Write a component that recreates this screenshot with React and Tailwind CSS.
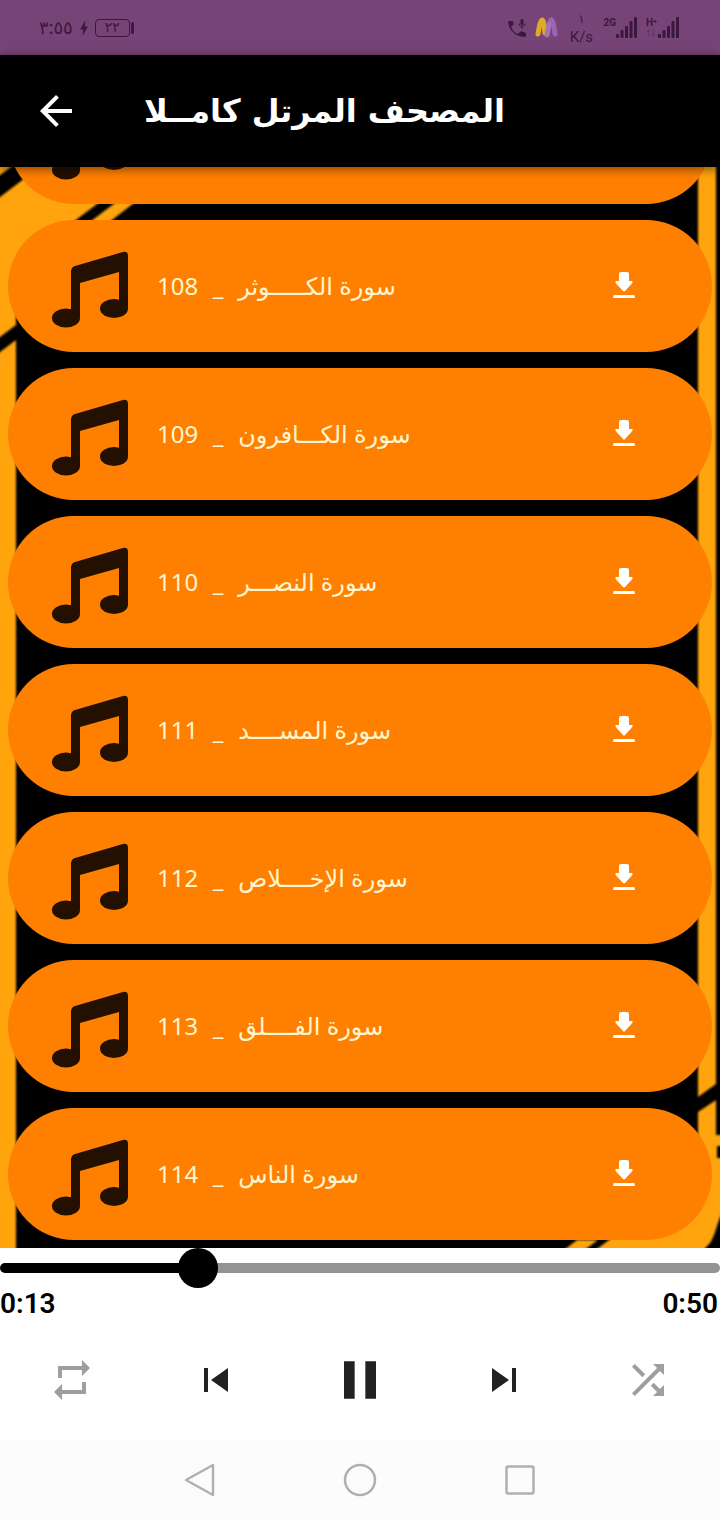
import React, { useState } from 'react';
import { MdArrowBack, MdBolt, MdPause, MdPhoneInTalk, MdRepeat, MdShuffle, MdSkipNext, MdSkipPrevious } from 'react-icons/md';

const DURATION = 50000;

const SURAHS = [
  { number: 108, name: 'سورة الكـــــوثر' },
  { number: 109, name: 'سورة الكـــافرون' },
  { number: 110, name: 'سورة النصـــر' },
  { number: 111, name: 'سورة المســــد' },
  { number: 112, name: 'سورة الإخــــلاص' },
  { number: 113, name: 'سورة الفــــلق' },
  { number: 114, name: 'سورة الناس' },
];

function formatTime(ms) {
  const seconds = Math.floor(ms / 1000);
  return `${Math.floor(seconds / 60)}:${String(seconds % 60).padStart(2, '0')}`;
}

function SignalBars() {
  return (
    <svg width="22" height="22" viewBox="0 0 22 22" fill="currentColor" aria-hidden="true">
      <rect x="0" y="17" width="3" height="4" rx="1" />
      <rect x="4.5" y="13" width="3" height="8" rx="1" />
      <rect x="9" y="9" width="3" height="12" rx="1" />
      <rect x="13.5" y="4" width="3" height="17" rx="1" />
      <rect x="18" y="0" width="3" height="21" rx="1" />
    </svg>
  );
}

function CarrierLogo() {
  return (
    <svg width="24" height="24" viewBox="0 0 24 24" fill="none" strokeLinecap="round" strokeLinejoin="round" strokeWidth="5" aria-hidden="true">
      <path d="M12 18 C13 12 14 7 16 4 C18 3 19 11 20 18" stroke="#9a64ae" />
      <path d="M3 18 C4 11 5 5 7 4 C9 4 9 12 10 17" stroke="#dfab25" />
      <path d="M12 19 L14 9" stroke="#a872b8" />
    </svg>
  );
}

function StatusBar() {
  return (
    <div className="h-[55px] shrink-0 bg-[#774477] text-[#3b183d] flex items-center justify-between pl-[39px] pr-10 font-['Roboto','DejaVu_Sans',sans-serif]">
      <div className="flex items-center gap-0.5">
        <span className="text-lg leading-none font-medium">٣:٥٥</span>
        <MdBolt size={18} />
        <div className="flex items-center gap-px">
          <span className="w-[35px] h-[18px] border border-current rounded-sm text-sm leading-none text-center">٢٢</span>
          <span className="w-[3px] h-3 rounded-sm bg-current" />
        </div>
      </div>
      <div className="flex items-center gap-2">
        <svg width="20" height="22" viewBox="0 0 20 22" fill="currentColor" aria-hidden="true">
          <path d="M4 10 C6 14 8 16 11 17 L13 15 Q14 14 15 14.500 L18 15.500 Q19 16 19 17 V19 Q19 20 17.500 20 C8 19.500 2 13 1 5 Q1 4 2 4 H5 Q6 4 6.200 5 L6.500 7.500 Z" />
          <rect x="13.500" y="2" width="3" height="6" rx="1.500" />
          <path d="M12 6.500 A3 3 0 0 0 18 6.500 M15 9.500 V12" fill="none" stroke="currentColor" />
        </svg>
        <CarrierLogo />
        <div className="w-7 pt-0.5 flex flex-col items-center">
          <span className="text-xs leading-4">١</span>
          <span className="text-[15px] leading-5">K/s</span>
        </div>
        <div className="flex items-start gap-2">
          <div className="flex items-start">
            <span className="text-[10px] leading-3 font-bold">2G</span>
            <SignalBars />
          </div>
          <div className="flex items-start">
            <span className="w-3 flex flex-col text-[10px] leading-3 font-bold">
              H⁺
              <svg width="10" height="9" viewBox="0 0 10 9" fill="none" stroke="currentColor" opacity="0.4" aria-hidden="true">
                <path d="M3 8 V1 L0.500 4 M7 1 V8 L9.500 5" />
              </svg>
            </span>
            <SignalBars />
          </div>
        </div>
      </div>
    </div>
  );
}

function Backdrop() {
  return (
    <svg className="absolute inset-0 w-full h-full" viewBox="0 0 720 1081" preserveAspectRatio="none" fill="#ffa40a" aria-hidden="true">
      <defs>
        <filter id="soft" x="-5%" y="-5%" width="110%" height="110%">
          <feGaussianBlur stdDeviation="1" />
        </filter>
      </defs>
      <g filter="url(#soft)">
        <path d="M-8 -8 H22 L-8 14 Z" />
        <path d="M-8 36 L50 -8 H157 L16 98 V158 L-8 176 Z" />
        <path d="M173 -8 H191 L90 70 H70 Z" />
        <path d="M-8 191 L16 173 V1090 H-8 Z" />
        <path d="M698 -8 H716 V917 L698 930 Z" />
        <path d="M698 945 L716 933 V968 H728 V979 H717 V991 H728 V1040 C718 1046 717 1066 710 1076 Q706 1080 698 1090 H586 L609 1073 L698 1010 Z" />
        <path d="M555 1090 L577 1073 H598 L575 1090 Z" />
      </g>
    </svg>
  );
}

function MusicIcon() {
  return (
    <svg width="80" height="88" viewBox="0 -8 80 88" fill="#241000" aria-hidden="true">
      <path d="M21 22 Q21 17 25 16 L73 2 Q78 1 78 6 V58 H69 V22 L30 33 V68 H21 Z" />
      <ellipse cx="16" cy="68" rx="14" ry="9.500" />
      <ellipse cx="64" cy="58.500" rx="14" ry="9.500" />
    </svg>
  );
}

function DownloadIcon() {
  return (
    <svg width="24" height="28" viewBox="0 0 24 28" fill="currentColor" aria-hidden="true">
      <path d="M7 2 Q7 0 9 0 H15 Q17 0 17 2 V9 H19.500 Q21.500 9.500 20 11.500 L13 19 Q12 20 11 19 L4 11.500 Q2.500 9.500 4.500 9 H7 Z" />
      <rect x="1" y="23" width="22" height="3" rx="1.500" />
    </svg>
  );
}

// A row without a surah is the one scrolled under the header
function SurahRow({ surah }) {
  return (
    <li className="h-[132px] shrink-0 rounded-full bg-[#ff8000] flex items-center pl-[42px] pr-[76px]">
      <MusicIcon />
      {surah && (
        <>
          <div className="flex-1 flex items-center pl-[27px] text-2xl text-[#fff5cf] font-['Noto_Sans','DejaVu_Sans',sans-serif]">
            <span>{surah.number}</span>
            <span className="w-10 text-center">_</span>
            <span dir="rtl">{surah.name}</span>
          </div>
          <button aria-label={`Download ${surah.number}`} className="text-white">
            <DownloadIcon />
          </button>
        </>
      )}
    </li>
  );
}

function Player() {
  const [position, setPosition] = useState(13090);
  const progress = `${(position / DURATION) * 100}%`;

  return (
    <div className="shrink-0 bg-white font-['Roboto',sans-serif]">
      <input
        type="range"
        aria-label="Seek"
        min={0}
        max={DURATION}
        step={10}
        value={position}
        onChange={(e) => setPosition(Number(e.target.value))}
        style={{ '--progress': progress }}
        className="block w-full h-10 appearance-none bg-transparent outline-none [&::-webkit-slider-runnable-track]:h-[10px] [&::-webkit-slider-runnable-track]:rounded-full [&::-webkit-slider-runnable-track]:bg-[linear-gradient(to_right,#000_var(--progress),#939393_var(--progress))] [&::-webkit-slider-thumb]:appearance-none [&::-webkit-slider-thumb]:size-10 [&::-webkit-slider-thumb]:-mt-[15px] [&::-webkit-slider-thumb]:rounded-full [&::-webkit-slider-thumb]:bg-black"
      />
      <div className="flex justify-between pr-0.5 text-[28px] leading-8 font-semibold text-black">
        <span>{formatTime(position)}</span>
        <span>{formatTime(DURATION)}</span>
      </div>
      <div className="h-[120px] grid grid-cols-5 items-center justify-items-center text-[#212121]">
        <button aria-label="Repeat" className="text-[#9e9e9e]"><MdRepeat size={48} /></button>
        <button aria-label="Previous"><MdSkipPrevious size={48} /></button>
        <button aria-label="Pause"><MdPause size={64} /></button>
        <button aria-label="Next"><MdSkipNext size={48} /></button>
        <button aria-label="Shuffle" className="text-[#9e9e9e]"><MdShuffle size={48} /></button>
      </div>
    </div>
  );
}

function NavBar() {
  return (
    <nav className="h-20 shrink-0 bg-[#fcfcfc] flex items-center justify-center gap-[124px] text-[#b0b0b0]">
      <button aria-label="Back">
        <svg width="36" height="36" viewBox="0 0 36 36" fill="none" stroke="currentColor" strokeWidth="2.500" strokeLinejoin="round">
          <path d="M32 3 V33 L5 18 Z" transform="translate(-1 0)" />
        </svg>
      </button>
      <button aria-label="Home">
        <svg width="36" height="36" viewBox="0 0 36 36" fill="none" stroke="currentColor" strokeWidth="2.500">
          <circle cx="18" cy="18" r="15" />
        </svg>
      </button>
      <button aria-label="Recent apps">
        <svg width="36" height="36" viewBox="0 0 36 36" fill="none" stroke="currentColor" strokeWidth="2.500">
          <rect x="4.500" y="4.500" width="27" height="27" rx="1.500" />
        </svg>
      </button>
    </nav>
  );
}

export default function App() {
  return (
    <div className="h-screen flex flex-col overflow-hidden bg-white">
      <StatusBar />
      <header className="relative z-10 h-28 shrink-0 bg-black text-white flex items-center pl-8 gap-16 shadow-[0_2px_10px_rgba(0,0,0,0.5)]">
        <button aria-label="Back"><MdArrowBack size={48} /></button>
        <h1 dir="rtl" className="text-[32px] leading-10 font-bold font-['DejaVu_Sans',sans-serif]">المصحف المرتل كامــلا</h1>
      </header>
      <main className="relative flex-1 min-h-0 overflow-hidden bg-black flex flex-col justify-end">
        <Backdrop />
        <ul className="relative flex flex-col gap-4 px-2 pb-2">
          <SurahRow />
          {SURAHS.map((surah) => <SurahRow key={surah.number} surah={surah} />)}
        </ul>
      </main>
      <Player />
      <NavBar />
    </div>
  );
}
